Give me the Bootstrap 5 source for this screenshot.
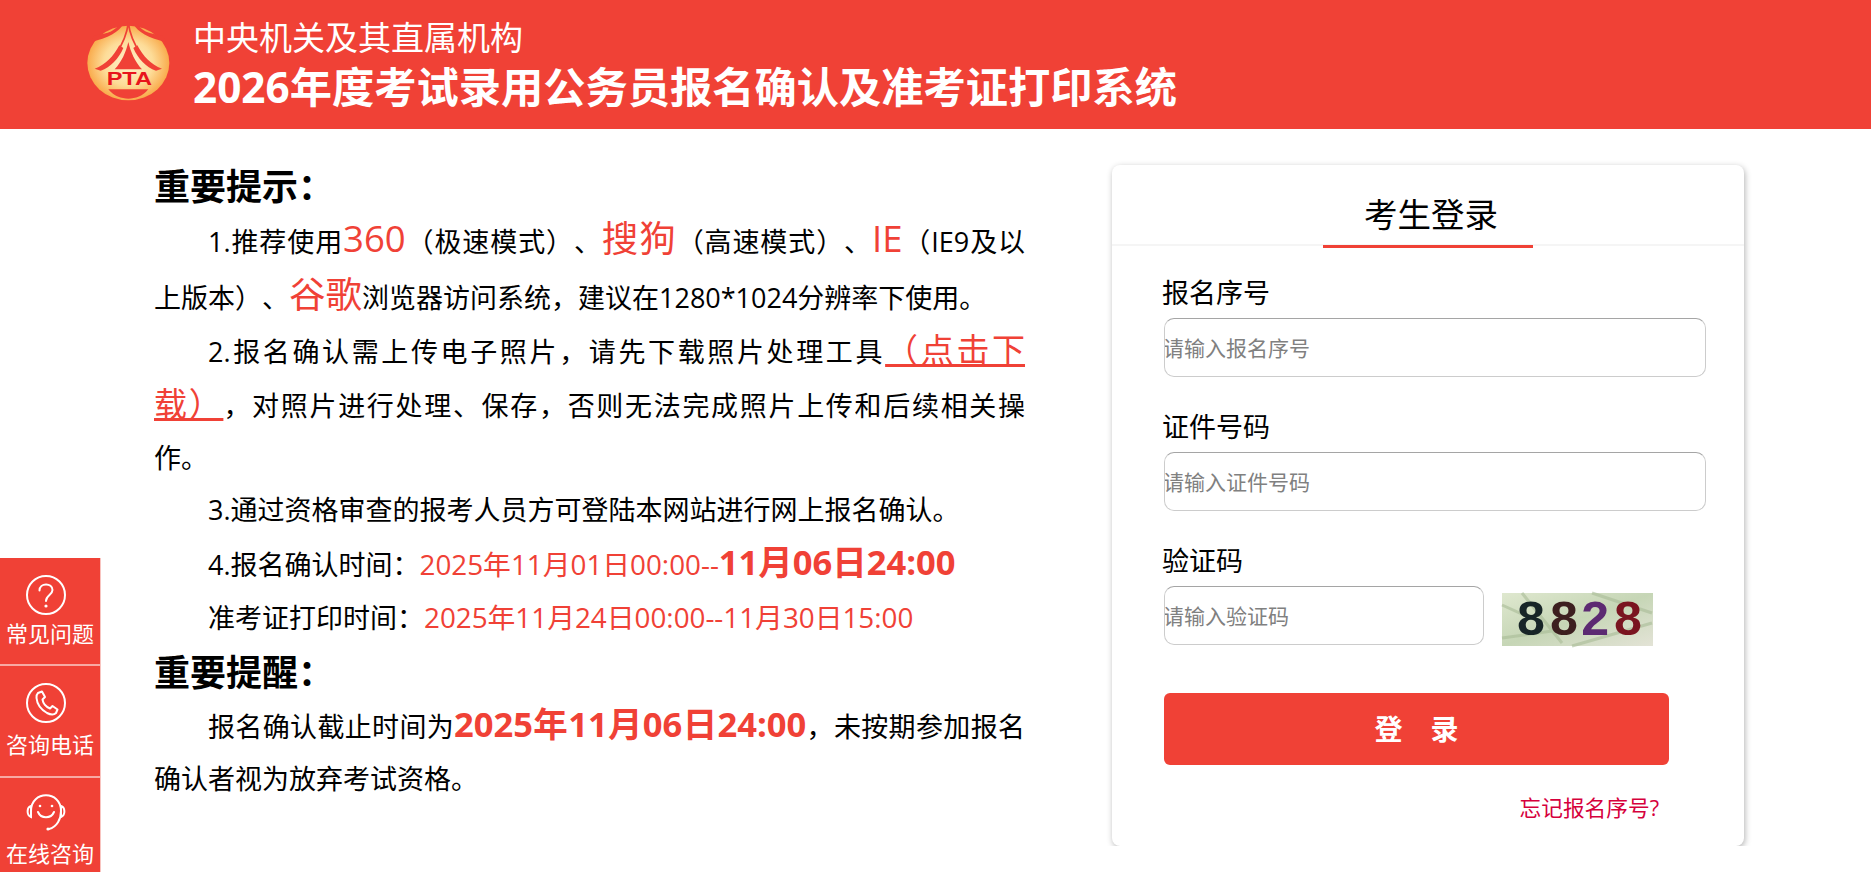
<!DOCTYPE html>
<html lang="zh-CN">
<head>
    <meta charset="UTF-8">
    <meta name="viewport" content="width=device-width, initial-scale=1.0">
    <title>2026年度考试录用公务员报名确认及准考证打印系统</title>
    <link href="https://cdn.jsdelivr.net/npm/bootstrap@5.3.0/dist/css/bootstrap.min.css" rel="stylesheet">
    <style>
        body {
            font-family: "Open Sans", "Noto Sans CJK SC", sans-serif;
            color: #000;
            overflow: hidden;
            text-spacing-trim: space-all;
        }

        .top-head {
            height: 129px;
            padding-left: 80px;
            background-color: #f04136;
            color: #fff;
        }

        .head-logo { width: 96px; height: 96px; margin: 3px 17px 0 0; }
        .head-sub { font-size: 33px; line-height: 44px; }
        .head-main { font-size: 42.25px; line-height: 52px; font-weight: 700; margin-top: 1px; }

        .page-body { padding: 33px 0 0 154px; gap: 87px; }

        .notice-col { width: 871px; font-size: 27px; line-height: 52px; }
        .notice-title { font-size: 36px; line-height: 50px; font-weight: 700; margin: 0; }
        .notice-text { margin: 0; text-indent: 2em; text-align: justify; }
        .red-text { color: #f04136; font-size: 27.8px; }
        .red-big { color: #f04136; font-size: 36.5px; }
        .red-bold { color: #f04136; font-size: 34.5px; font-weight: 700; }
        .red-link { color: #f04136; font-size: 33px; text-decoration: underline; }

        .login-box {
            width: 632px;
            height: 681px;
            margin-top: 3px;
            border: 0;
            border-radius: 8px;
            box-shadow: 1px 2px 6px rgba(0, 0, 0, .3);
        }

        .login-head {
            height: 81px;
            border-bottom: 2px solid #f5f5f5;
        }

        .login-head span {
            display: block;
            width: 210px;
            height: 83px;
            padding: 18px 0 0 6px;
            line-height: 62px;
            margin-left: 211px;
            font-size: 33.5px;
            text-align: center;
            border-bottom: 3px solid #f04136;
        }

        .login-form { padding: 27px 52px 0; }
        .field-label { font-size: 27px; line-height: 40px; margin: 0 0 5px -2px; display: block; }
        .field-gap { margin-bottom: 30px; }

        .login-form .form-control {
            width: 542px;
            height: 59px;
            padding: 0;
            font-size: 21px;
            text-indent: -2px;
            border: 1px solid #ccc;
            border-top-color: #a5a5a5;
            border-radius: 10px;
        }

        .login-form .form-control::placeholder { color: #808080; }
        .login-form .code-input { width: 320px; }
        .code-pic { width: 151px; height: 53px; margin: 7px 0 0 18px; display: block; flex: none; overflow: visible; }

        .login-btn {
            width: 505px;
            height: 72px;
            margin-top: 47px;
            font-size: 28px;
            font-weight: 700;
            color: #fff;
            background-color: #f04136;
            border: 0;
            border-radius: 6px;
        }

        .login-btn:hover { color: #fff; background-color: #f04136; }

        .forgot-link {
            display: block;
            width: 495px;
            margin-top: 27px;
            text-align: right;
            font-size: 21.7px;
            color: #d6003c;
            text-decoration: none;
        }

        .side-bar {
            position: fixed;
            left: 0;
            top: 558px;
            width: 101px;
            background-color: #f04136;
            border-right: 1px solid #f8c4c0;
            color: #fff;
            font-size: 22px;
            text-align: center;
        }

        .side-item { height: 112px; padding-top: 16px; border-bottom: 2px solid #f8a9a3; line-height: 28px; }
        .side-item:first-child { height: 108px; }
        .side-item:last-child { padding-top: 13px; border-bottom: 0; }
        .side-item svg { display: block; margin: 0 0 3px 24px; width: 44px; height: 42px; }
        .side-item + .side-item svg { margin-bottom: 6px; }
    </style>
</head>
<body>
    <header class="top-head d-flex align-items-center">
        <svg class="head-logo" viewBox="0 0 288 288">
            <defs>
                <radialGradient id="logoBg" cx="50%" cy="50%" r="50%">
                    <stop offset="0" stop-color="#fff2cf"/>
                    <stop offset=".6" stop-color="#fddc98"/>
                    <stop offset="1" stop-color="#f9ab4c"/>
                </radialGradient>
            </defs>
            <ellipse cx="145" cy="135" rx="123" ry="112" fill="url(#logoBg)"/>
            <g fill="#f04136">
                <path d="M130 18 C118 40 85 62 30 72 L44 52 C85 48 108 36 118 18Z"/>
                <path d="M160 18 C172 40 205 62 260 72 L246 52 C205 48 182 36 172 18Z"/>
                <path d="M118 82 C100 115 78 140 44 152 L62 158 C92 148 116 122 130 90Z"/>
                <path d="M172 82 C190 115 212 140 246 152 L228 158 C198 148 174 122 160 90Z"/>
                <path d="M145 72 C152 102 165 132 186 154 L104 154 C125 132 138 102 145 72Z"/>
                <path d="M85 214 L205 214 C190 234 165 242 145 242 C125 242 100 234 85 214Z"/>
            </g>
            <path d="M145 14 C141 48 128 78 108 108 M145 14 C149 48 162 78 182 108" fill="none" stroke="#f04136" stroke-width="5"/>
            <text x="148" y="202" text-anchor="middle" font-family="Liberation Sans, sans-serif" font-size="54" font-weight="700" fill="#e8141c" textLength="136" lengthAdjust="spacingAndGlyphs">PTA</text>
        </svg>
        <div>
            <div class="head-sub">中央机关及其直属机构</div>
            <div class="head-main">2026年度考试录用公务员报名确认及准考证打印系统</div>
        </div>
    </header>

    <main class="page-body d-flex align-items-start">
        <section class="notice-col">
            <h2 class="notice-title">重要提示：</h2>
            <p class="notice-text">1.推荐使用<span class="red-big">360</span>（极速模式）、<span class="red-big">搜狗</span>（高速模式）、<span class="red-big">IE</span>（IE9及以上版本）、<span class="red-big">谷歌</span>浏览器访问系统，建议在1280*1024分辨率下使用。</p>
            <p class="notice-text">2.报名确认需上传电子照片，请先下载照片处理工具<a href="#" class="red-link">（点击下载）</a>，对照片进行处理、保存，否则无法完成照片上传和后续相关操作。</p>
            <p class="notice-text">3.通过资格审查的报考人员方可登陆本网站进行网上报名确认。</p>
            <p class="notice-text">4.报名确认时间：<span class="red-text">2025年11月01日00:00--</span><span class="red-bold">11月06日24:00</span></p>
            <p class="notice-text">准考证打印时间：<span class="red-text">2025年11月24日00:00--11月30日15:00</span></p>
            <h2 class="notice-title mt-1">重要提醒：</h2>
            <p class="notice-text">报名确认截止时间为<span class="red-bold">2025年11月06日24:00</span>，未按期参加报名确认者视为放弃考试资格。</p>
        </section>

        <section class="card login-box">
            <div class="login-head"><span>考生登录</span></div>
            <form class="login-form">
                <div class="field-gap">
                    <label class="field-label" for="regNo">报名序号</label>
                    <input type="text" class="form-control" id="regNo" placeholder="请输入报名序号">
                </div>
                <div class="field-gap">
                    <label class="field-label" for="idNo">证件号码</label>
                    <input type="text" class="form-control" id="idNo" placeholder="请输入证件号码">
                </div>
                <div>
                    <label class="field-label" for="codeNo">验证码</label>
                    <div class="d-flex align-items-start">
                        <input type="text" class="form-control code-input" id="codeNo" placeholder="请输入验证码">
                        <svg class="code-pic" viewBox="0 0 151 53">
                            <defs>
                                <linearGradient id="codeBg" x1="0" y1="0" x2="1" y2="1">
                                    <stop offset="0" stop-color="#dfe8cf"/>
                                    <stop offset=".5" stop-color="#c6d6b6"/>
                                    <stop offset="1" stop-color="#e3e3d6"/>
                                </linearGradient>
                            </defs>
                            <rect width="151" height="53" fill="url(#codeBg)"/>
                            <path d="M0 12 L40 30 M20 0 L60 50 M70 53 L150 30 M90 0 L150 20 M0 45 L50 38" stroke="#a9bc97" stroke-width="3" opacity=".6"/>
                            <g font-family="Liberation Mono, monospace" font-size="50" font-weight="700" text-anchor="middle">
                                <text x="29" y="42" fill="#172527">8</text>
                                <text x="62" y="42" fill="#3c1f1f">8</text>
                                <text x="93" y="42" fill="#5c2a72">2</text>
                                <text x="126" y="42" fill="#7a1420">8</text>
                            </g>
                        </svg>
                    </div>
                </div>
                <button type="button" class="btn login-btn">登&emsp;录</button>
                <a href="#" class="forgot-link">忘记报名序号?</a>
            </form>
        </section>
    </main>

    <aside class="side-bar">
        <div class="side-item">
            <svg viewBox="0 0 44 42" fill="none" stroke="#fff" stroke-width="2">
                <circle cx="22" cy="21" r="19"/>
                <path d="M15.5 16.5 C15.5 8.5 28.5 8.5 28.5 16 C28.5 21 22 21 22 27" stroke-linecap="round"/>
                <circle cx="22" cy="32" r="1.6" fill="#fff" stroke="none"/>
            </svg>
            常见问题
        </div>
        <div class="side-item">
            <svg viewBox="0 0 44 42" fill="none" stroke="#fff" stroke-width="2">
                <circle cx="22" cy="21" r="19"/>
                <path d="M14 11 L18 9.5 L21 15 L18.5 17.5 C19 21 22 25 26 26.5 L28.5 24 L33.5 27.5 L32 31 C30 33 27 33 23 31 C17 27.5 13 21.5 12.5 16 C12.3 14 13 12 14 11Z" stroke-linejoin="round"/>
            </svg>
            咨询电话
        </div>
        <div class="side-item">
            <svg viewBox="0 0 44 42" fill="none" stroke="#fff" stroke-width="2" stroke-linecap="round">
                <path d="M7 20 C7 -1 37 -1 37 20 C37 28 33 36 25 38"/>
                <path d="M7 15 C3 16 2 24 7 26Z M37 15 C41 16 42 24 37 26Z"/>
                <circle cx="16" cy="15" r="1.3" fill="#fff" stroke="none"/>
                <circle cx="28" cy="15" r="1.3" fill="#fff" stroke="none"/>
                <path d="M14 21 C17 28 27 28 30 21"/>
                <circle cx="24" cy="38" r="1.6" fill="#fff" stroke="none"/>
            </svg>
            在线咨询
        </div>
    </aside>

    <script src="https://cdn.jsdelivr.net/npm/bootstrap@5.3.0/dist/js/bootstrap.bundle.min.js"></script>
</body>
</html>
